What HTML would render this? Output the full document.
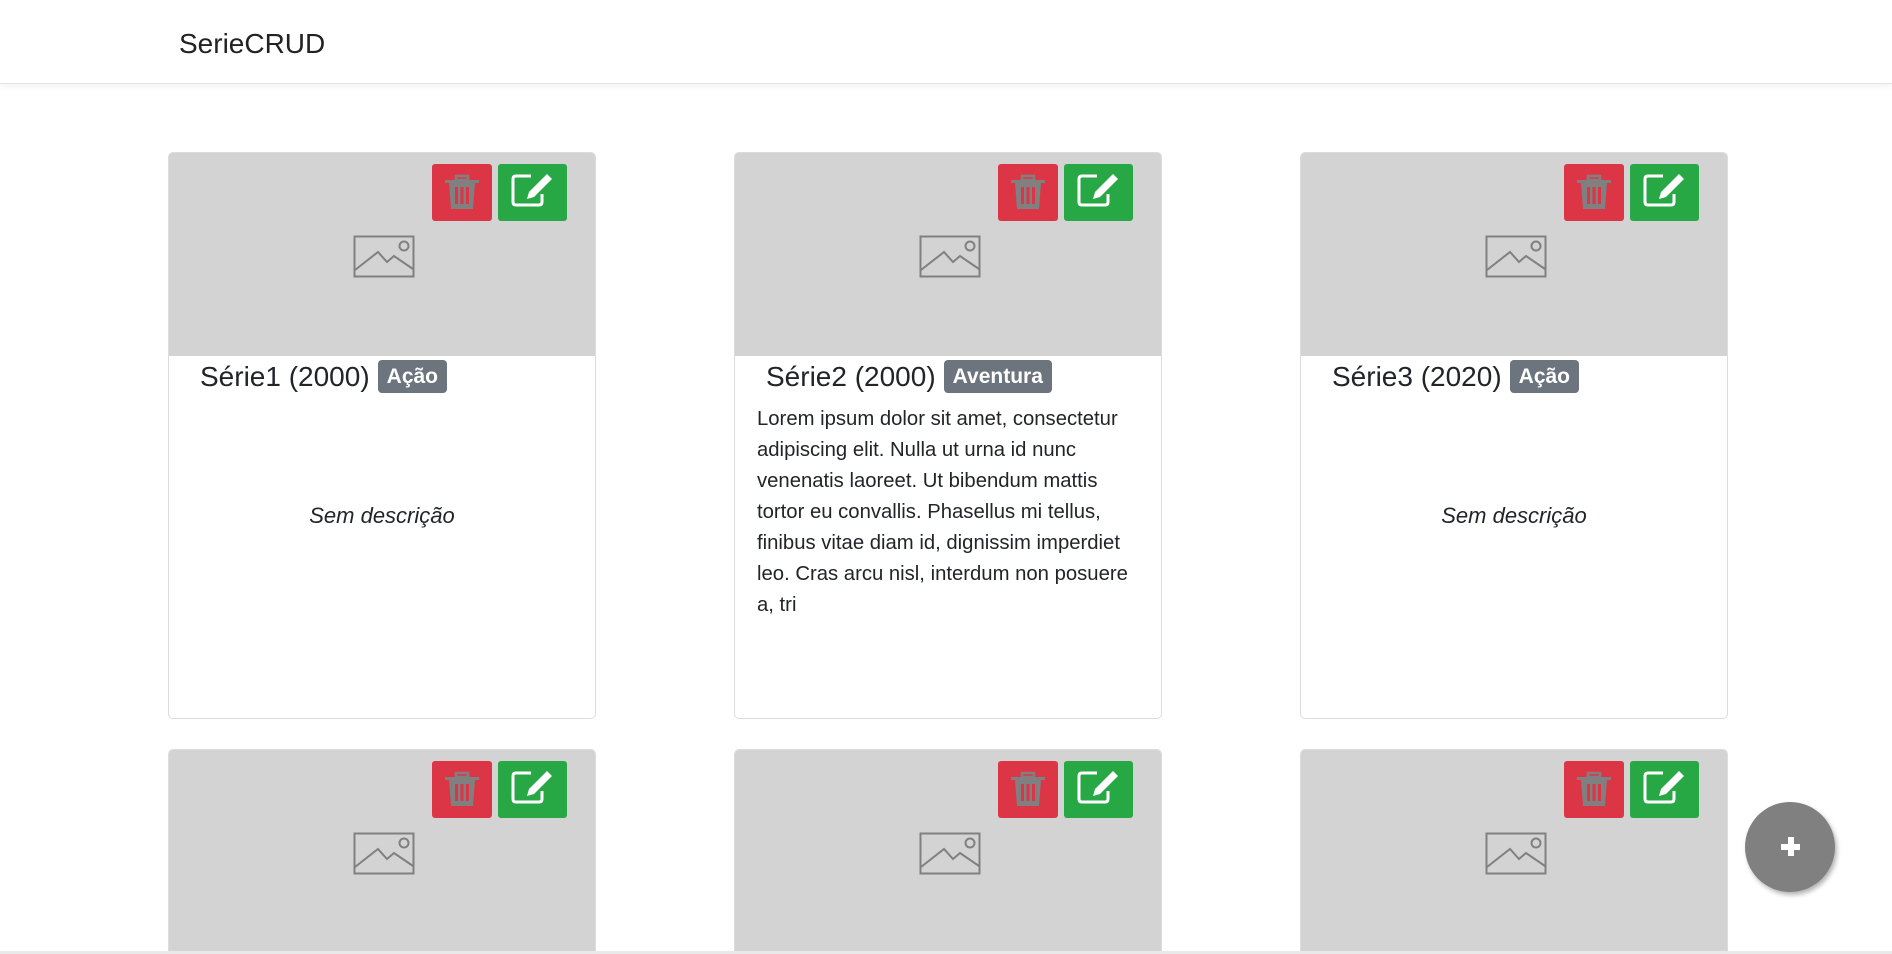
<!DOCTYPE html>
<html><head><meta charset="utf-8"><style>
*{box-sizing:border-box;margin:0;padding:0}
html,body{width:1892px;height:954px;overflow:hidden;background:#fff;font-family:"Liberation Sans","DejaVu Sans",sans-serif;color:#212529}
.nav{position:absolute;left:0;top:0;width:1892px;height:84px;border-bottom:1px solid #e3e4e6;box-shadow:0 2px 6px rgba(0,0,0,.06);background:#fff}
.nav span{position:absolute;left:179px;top:30px;font-size:28px;line-height:28px;color:#222}
.card{position:absolute;width:428px;border:1px solid #dcdcdc;border-radius:5px;background:#fff;overflow:hidden}
.img{position:absolute;left:0;top:0;width:100%;height:203px;background:#d3d3d3}
.btn{position:absolute;top:11px;height:57px;border-radius:3px}
.del{left:263px;width:60px;background:#dc3545}
.edit{left:329px;width:69px;background:#28a745}
.btn svg{position:absolute}
.ph{position:absolute;left:184px;top:82px}
.title{position:absolute;left:31px;top:206px;font-size:28px;line-height:36px;white-space:nowrap}
.badge{display:inline-block;vertical-align:top;margin-top:1px;margin-left:8px;background:#6c757d;color:#fff;font-weight:bold;font-size:21px;line-height:33px;height:33px;padding:0 9px;border-radius:4px}
.sem{position:absolute;left:0;width:100%;top:350px;text-align:center;font-style:italic;font-size:22px}
.desc{position:absolute;left:22px;top:251px;font-size:20.3px;line-height:31px;white-space:nowrap}
.fab{position:absolute;left:1745px;top:802px;width:90px;height:90px;border-radius:50%;background:#808080;box-shadow:2px 3px 5px rgba(0,0,0,.3)}
.fab:before{content:"";position:absolute;left:36px;top:42px;width:19px;height:6px;background:#fff}
.fab:after{content:"";position:absolute;left:43px;top:35px;width:6px;height:19px;background:#fff}
.bot{position:absolute;left:0;top:951px;width:1892px;height:3px;background:#e9e9e9}
.r2{height:202px;border-bottom:none;border-radius:5px 5px 0 0}
</style></head><body>
<div class="nav"><span>SerieCRUD</span></div>

<div class="card" style="left:168px;top:152px;height:567px">
 <div class="img">
  <svg class="ph" width="62" height="43" viewBox="0 0 62 43"><rect x="1.5" y="1.5" width="59" height="40" fill="none" stroke="#808080" stroke-width="2"/><polyline points="2,35 25,17 34,27 41,21 60,34" fill="none" stroke="#808080" stroke-width="2"/><circle cx="51" cy="11" r="4.5" fill="none" stroke="#808080" stroke-width="2"/></svg>
  <div class="btn del"><svg style="left:13px;top:9px" width="34" height="37" viewBox="0 0 34 37"><rect x="0" y="7" width="34" height="3" fill="#808080"/><rect x="11" y="3" width="12" height="4" fill="none" stroke="#808080" stroke-width="2.5"/><path d="M4 10h26l-2 26H6z" fill="#808080"/><rect x="10" y="14" width="3" height="17" fill="#dc3545"/><rect x="15.5" y="14" width="3" height="17" fill="#dc3545"/><rect x="21" y="14" width="3" height="17" fill="#dc3545"/></svg></div>
  <div class="btn edit"><svg style="left:13px;top:8px" width="44" height="36" viewBox="0 0 44 36"><path d="M20 4H5Q2 4 2 7V30Q2 33 5 33H28Q31 33 31 30V22" fill="none" stroke="#fff" stroke-width="3"/><path d="M36 2l5 5-18 18-7 2 2-7z" fill="#fff"/></svg></div>
 </div>
 <div class="title">Série1 (2000)<span class="badge">Ação</span></div>
 <div class="sem">Sem descrição</div>
</div>

<div class="card" style="left:734px;top:152px;height:567px">
 <div class="img">
  <svg class="ph" width="62" height="43" viewBox="0 0 62 43"><rect x="1.5" y="1.5" width="59" height="40" fill="none" stroke="#808080" stroke-width="2"/><polyline points="2,35 25,17 34,27 41,21 60,34" fill="none" stroke="#808080" stroke-width="2"/><circle cx="51" cy="11" r="4.5" fill="none" stroke="#808080" stroke-width="2"/></svg>
  <div class="btn del"><svg style="left:13px;top:9px" width="34" height="37" viewBox="0 0 34 37"><rect x="0" y="7" width="34" height="3" fill="#808080"/><rect x="11" y="3" width="12" height="4" fill="none" stroke="#808080" stroke-width="2.5"/><path d="M4 10h26l-2 26H6z" fill="#808080"/><rect x="10" y="14" width="3" height="17" fill="#dc3545"/><rect x="15.5" y="14" width="3" height="17" fill="#dc3545"/><rect x="21" y="14" width="3" height="17" fill="#dc3545"/></svg></div>
  <div class="btn edit"><svg style="left:13px;top:8px" width="44" height="36" viewBox="0 0 44 36"><path d="M20 4H5Q2 4 2 7V30Q2 33 5 33H28Q31 33 31 30V22" fill="none" stroke="#fff" stroke-width="3"/><path d="M36 2l5 5-18 18-7 2 2-7z" fill="#fff"/></svg></div>
 </div>
 <div class="title">Série2 (2000)<span class="badge">Aventura</span></div>
 <div class="desc">Lorem ipsum dolor sit amet, consectetur<br>adipiscing elit. Nulla ut urna id nunc<br>venenatis laoreet. Ut bibendum mattis<br>tortor eu convallis. Phasellus mi tellus,<br>finibus vitae diam id, dignissim imperdiet<br>leo. Cras arcu nisl, interdum non posuere<br>a, tri</div>
</div>

<div class="card" style="left:1300px;top:152px;height:567px">
 <div class="img">
  <svg class="ph" width="62" height="43" viewBox="0 0 62 43"><rect x="1.5" y="1.5" width="59" height="40" fill="none" stroke="#808080" stroke-width="2"/><polyline points="2,35 25,17 34,27 41,21 60,34" fill="none" stroke="#808080" stroke-width="2"/><circle cx="51" cy="11" r="4.5" fill="none" stroke="#808080" stroke-width="2"/></svg>
  <div class="btn del"><svg style="left:13px;top:9px" width="34" height="37" viewBox="0 0 34 37"><rect x="0" y="7" width="34" height="3" fill="#808080"/><rect x="11" y="3" width="12" height="4" fill="none" stroke="#808080" stroke-width="2.5"/><path d="M4 10h26l-2 26H6z" fill="#808080"/><rect x="10" y="14" width="3" height="17" fill="#dc3545"/><rect x="15.5" y="14" width="3" height="17" fill="#dc3545"/><rect x="21" y="14" width="3" height="17" fill="#dc3545"/></svg></div>
  <div class="btn edit"><svg style="left:13px;top:8px" width="44" height="36" viewBox="0 0 44 36"><path d="M20 4H5Q2 4 2 7V30Q2 33 5 33H28Q31 33 31 30V22" fill="none" stroke="#fff" stroke-width="3"/><path d="M36 2l5 5-18 18-7 2 2-7z" fill="#fff"/></svg></div>
 </div>
 <div class="title">Série3 (2020)<span class="badge">Ação</span></div>
 <div class="sem">Sem descrição</div>
</div>

<div class="card r2" style="left:168px;top:749px">
 <div class="img">
  <svg class="ph" width="62" height="43" viewBox="0 0 62 43"><rect x="1.5" y="1.5" width="59" height="40" fill="none" stroke="#808080" stroke-width="2"/><polyline points="2,35 25,17 34,27 41,21 60,34" fill="none" stroke="#808080" stroke-width="2"/><circle cx="51" cy="11" r="4.5" fill="none" stroke="#808080" stroke-width="2"/></svg>
  <div class="btn del"><svg style="left:13px;top:9px" width="34" height="37" viewBox="0 0 34 37"><rect x="0" y="7" width="34" height="3" fill="#808080"/><rect x="11" y="3" width="12" height="4" fill="none" stroke="#808080" stroke-width="2.5"/><path d="M4 10h26l-2 26H6z" fill="#808080"/><rect x="10" y="14" width="3" height="17" fill="#dc3545"/><rect x="15.5" y="14" width="3" height="17" fill="#dc3545"/><rect x="21" y="14" width="3" height="17" fill="#dc3545"/></svg></div>
  <div class="btn edit"><svg style="left:13px;top:8px" width="44" height="36" viewBox="0 0 44 36"><path d="M20 4H5Q2 4 2 7V30Q2 33 5 33H28Q31 33 31 30V22" fill="none" stroke="#fff" stroke-width="3"/><path d="M36 2l5 5-18 18-7 2 2-7z" fill="#fff"/></svg></div>
 </div>
</div>

<div class="card r2" style="left:734px;top:749px">
 <div class="img">
  <svg class="ph" width="62" height="43" viewBox="0 0 62 43"><rect x="1.5" y="1.5" width="59" height="40" fill="none" stroke="#808080" stroke-width="2"/><polyline points="2,35 25,17 34,27 41,21 60,34" fill="none" stroke="#808080" stroke-width="2"/><circle cx="51" cy="11" r="4.5" fill="none" stroke="#808080" stroke-width="2"/></svg>
  <div class="btn del"><svg style="left:13px;top:9px" width="34" height="37" viewBox="0 0 34 37"><rect x="0" y="7" width="34" height="3" fill="#808080"/><rect x="11" y="3" width="12" height="4" fill="none" stroke="#808080" stroke-width="2.5"/><path d="M4 10h26l-2 26H6z" fill="#808080"/><rect x="10" y="14" width="3" height="17" fill="#dc3545"/><rect x="15.5" y="14" width="3" height="17" fill="#dc3545"/><rect x="21" y="14" width="3" height="17" fill="#dc3545"/></svg></div>
  <div class="btn edit"><svg style="left:13px;top:8px" width="44" height="36" viewBox="0 0 44 36"><path d="M20 4H5Q2 4 2 7V30Q2 33 5 33H28Q31 33 31 30V22" fill="none" stroke="#fff" stroke-width="3"/><path d="M36 2l5 5-18 18-7 2 2-7z" fill="#fff"/></svg></div>
 </div>
</div>

<div class="card r2" style="left:1300px;top:749px">
 <div class="img">
  <svg class="ph" width="62" height="43" viewBox="0 0 62 43"><rect x="1.5" y="1.5" width="59" height="40" fill="none" stroke="#808080" stroke-width="2"/><polyline points="2,35 25,17 34,27 41,21 60,34" fill="none" stroke="#808080" stroke-width="2"/><circle cx="51" cy="11" r="4.5" fill="none" stroke="#808080" stroke-width="2"/></svg>
  <div class="btn del"><svg style="left:13px;top:9px" width="34" height="37" viewBox="0 0 34 37"><rect x="0" y="7" width="34" height="3" fill="#808080"/><rect x="11" y="3" width="12" height="4" fill="none" stroke="#808080" stroke-width="2.5"/><path d="M4 10h26l-2 26H6z" fill="#808080"/><rect x="10" y="14" width="3" height="17" fill="#dc3545"/><rect x="15.5" y="14" width="3" height="17" fill="#dc3545"/><rect x="21" y="14" width="3" height="17" fill="#dc3545"/></svg></div>
  <div class="btn edit"><svg style="left:13px;top:8px" width="44" height="36" viewBox="0 0 44 36"><path d="M20 4H5Q2 4 2 7V30Q2 33 5 33H28Q31 33 31 30V22" fill="none" stroke="#fff" stroke-width="3"/><path d="M36 2l5 5-18 18-7 2 2-7z" fill="#fff"/></svg></div>
 </div>
</div>

<div class="fab"></div>
<div class="bot"></div>
</body></html>
